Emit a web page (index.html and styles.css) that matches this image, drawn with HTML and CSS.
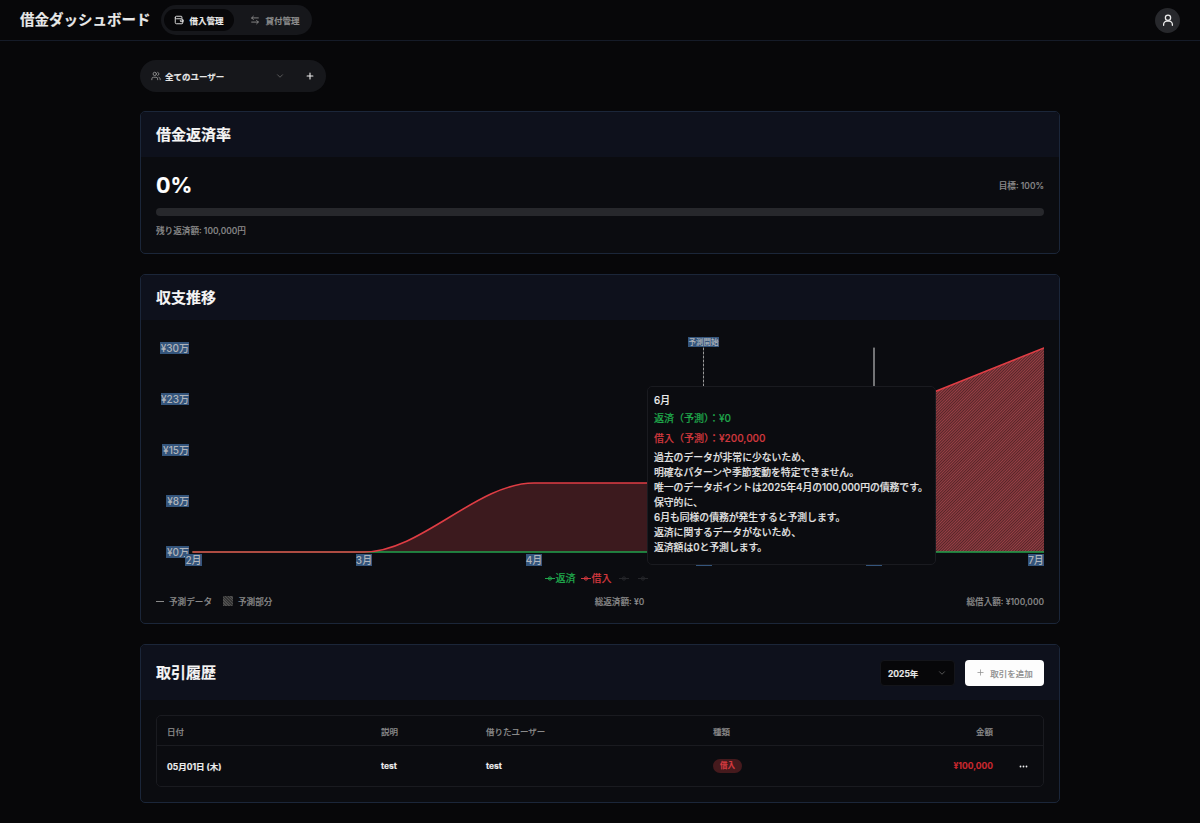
FILE: index.html
```html
<!DOCTYPE html>
<html lang="ja">
<head>
<meta charset="utf-8">
<title>借金ダッシュボード</title>
<link rel="stylesheet" href="styles.css">
</head>
<body>
<header class="topbar">
  <div class="topbar-left">
    <h1 class="brand">借金ダッシュボード</h1>
    <nav class="tabs">
      <a class="tab tab-active">
        <svg class="tab-icon" viewBox="0 0 24 24"><path d="M19 7V5a2 2 0 0 0-2-2H6a3 3 0 0 0-3 3v12a3 3 0 0 0 3 3h13a2 2 0 0 0 2-2v-3"/><path d="M3 6a3 3 0 0 0 3 3h13a2 2 0 0 1 2 2v3"/><path d="M21 12h-4a2 2 0 0 0 0 4h4z"/></svg>
        借入管理
      </a>
      <a class="tab">
        <svg class="tab-icon" viewBox="0 0 24 24"><path d="M8 3 4 7l4 4"/><path d="M4 7h16"/><path d="m16 21 4-4-4-4"/><path d="M20 17H4"/></svg>
        貸付管理
      </a>
    </nav>
  </div>
  <button class="avatar">
    <svg viewBox="0 0 24 24"><circle cx="12" cy="8" r="4.5"/><path d="M4.5 21v-1.500a5.500 5.500 0 0 1 5.500-5.500h4a5.500 5.500 0 0 1 5.500 5.500V21"/></svg>
  </button>
</header>

<main class="page">
  <div class="filter">
    <svg class="filter-users" viewBox="0 0 24 24"><path d="M16 21v-2a4 4 0 0 0-4-4H6a4 4 0 0 0-4 4v2"/><circle cx="9" cy="7" r="4"/><path d="M22 21v-2a4 4 0 0 0-3-3.870"/><path d="M16 3.130a4 4 0 0 1 0 7.750"/></svg>
    <span class="filter-label">全てのユーザー</span>
    <svg class="chev" viewBox="0 0 24 24"><path d="m6 9 6 6 6-6"/></svg>
    <svg class="filter-plus" viewBox="0 0 24 24"><path d="M5 12h14"/><path d="M12 5v14"/></svg>
  </div>

  <section class="card">
    <div class="card-head"><h2 class="card-title">借金返済率</h2></div>
    <div class="card-body rate-body">
      <div class="rate-top">
        <span class="rate-value">0%</span>
        <span class="muted-small">目標: 100%</span>
      </div>
      <div class="progress"></div>
      <p class="muted-small rate-note">残り返済額: 100,000円</p>
    </div>
  </section>

  <section class="card">
    <div class="card-head"><h2 class="card-title">収支推移</h2></div>
    <div class="card-body chart-body">
      <div class="chart">
        <svg class="chart-svg" viewBox="156 320 888 248" width="888" height="248">
          <defs>
            <pattern id="hatch" width="2" height="2" patternUnits="userSpaceOnUse" patternTransform="rotate(45)">
              <rect width="2" height="2" fill="#532528"/>
              <rect width="1" height="2" fill="#9a4046"/>
            </pattern>
          </defs>
          <path class="area-past" d="M364 552C421 552 477 483 534 483L704 483L704 552Z"/>
          <path class="area-future" d="M704 483C761 483 817 439 874 416L1044 348L1044 552L704 552Z"/>
          <line class="line-green" x1="193" y1="552" x2="1044" y2="552"/>
          <path class="line-red" d="M193 552L364 552C421 552 477 483 534 483L704 483C761 483 817 439 874 416L1044 348"/>
          <line class="line-start" x1="703.500" y1="348" x2="703.500" y2="552"/>
          <line class="line-cursor" x1="874" y1="348" x2="874" y2="552"/>

          <g class="ylabels">
            <rect x="160" y="342" width="29" height="12"/><text x="189" y="351.500">¥30万</text>
            <rect x="161" y="393" width="28" height="12"/><text x="189" y="402.500">¥23万</text>
            <rect x="162" y="444" width="27" height="12"/><text x="189" y="453.500">¥15万</text>
            <rect x="166" y="495" width="23" height="12"/><text x="189" y="504.500">¥8万</text>
            <rect x="166" y="546" width="23" height="12"/><text x="189" y="555.500">¥0万</text>
          </g>
          <g class="xlabels">
            <rect x="185" y="554" width="17" height="12"/><text x="193.500" y="563.500">2月</text>
            <rect x="356" y="554" width="16" height="12"/><text x="364" y="563.500">3月</text>
            <rect x="526" y="554" width="16" height="12"/><text x="534" y="563.500">4月</text>
            <rect x="696" y="554" width="16" height="12"/><text x="704" y="563.500">5月</text>
            <rect x="866" y="554" width="16" height="12"/><text x="874" y="563.500">6月</text>
            <rect x="1028" y="554" width="16" height="12"/><text x="1036" y="563.500">7月</text>
          </g>
          <g class="start-label">
            <rect x="688" y="337" width="31" height="10"/><text x="703.500" y="345">予測開始</text>
          </g>
        </svg>
        <div class="tooltip">
          <p class="tip-title">6月</p>
          <p class="tip-green">返済（予測）：¥0</p>
          <p class="tip-red">借入（予測）：¥200,000</p>
          <p class="tip-text">過去のデータが非常に少ないため、<br>明確なパターンや季節変動を特定できません。<br>唯一のデータポイントは2025年4月の100,000円の債務です。<br>保守的に、<br>6月も同様の債務が発生すると予測します。<br>返済に関するデータがないため、<br>返済額は0と予測します。</p>
        </div>
      </div>
      <div class="legend">
        <span class="legend-item legend-green"><svg class="legend-mark" viewBox="0 0 12 8"><path d="M0 4h12"/><circle cx="6" cy="4" r="2"/></svg>返済</span>
        <span class="legend-item legend-red"><svg class="legend-mark" viewBox="0 0 12 8"><path d="M0 4h12"/><circle cx="6" cy="4" r="2"/></svg>借入</span>
        <span class="legend-item legend-dim"><svg class="legend-mark" viewBox="0 0 12 8"><path d="M0 4h12"/><circle cx="6" cy="4" r="2"/></svg></span>
        <span class="legend-item legend-dim"><svg class="legend-mark" viewBox="0 0 12 8"><path d="M0 4h12"/><circle cx="6" cy="4" r="2"/></svg></span>
      </div>
      <div class="chart-foot">
        <div class="foot-key">
          <span class="key-line"></span><span>予測データ</span>
          <span class="key-hatch"></span><span>予測部分</span>
        </div>
        <span>総返済額: ¥0</span>
        <span>総借入額: ¥100,000</span>
      </div>
    </div>
  </section>

  <section class="card">
    <div class="card-head head-tall">
      <h2 class="card-title">取引履歴</h2>
      <div class="head-actions">
        <div class="year-select"><span>2025年</span><svg class="chev" viewBox="0 0 24 24"><path d="m6 9 6 6 6-6"/></svg></div>
        <button class="add-btn"><svg class="add-icon" viewBox="0 0 24 24"><path d="M5 12h14"/><path d="M12 5v14"/></svg>取引を追加</button>
      </div>
    </div>
    <div class="card-body table-body">
      <table class="tx-table">
        <colgroup>
          <col class="c-date"><col class="c-desc"><col class="c-user"><col class="c-type"><col class="c-amount"><col class="c-menu">
        </colgroup>
        <thead>
          <tr><th>日付</th><th>説明</th><th>借りたユーザー</th><th>種類</th><th class="right">金額</th><th></th></tr>
        </thead>
        <tbody>
          <tr>
            <td>05月01日 (木)</td><td>test</td><td>test</td>
            <td><span class="badge">借入</span></td>
            <td class="right amount">¥100,000</td>
            <td class="menu-cell"><svg class="dots" viewBox="0 0 12 4"><circle cx="2" cy="2" r="1.200"/><circle cx="6" cy="2" r="1.200"/><circle cx="10" cy="2" r="1.200"/></svg></td>
          </tr>
        </tbody>
      </table>
    </div>
  </section>
</main>
</body>
</html>
```
FILE: styles.css
```css
* { box-sizing: border-box; margin: 0; padding: 0; }
html, body { height: 100%; }
body {
  background: #070709;
  color: #f2f2f2;
  font-family: Inter, "Noto Sans CJK JP", sans-serif;
  overflow: hidden;
  -webkit-text-stroke: 0.15px currentColor;
}
svg { display: block; fill: none; stroke: currentColor; stroke-linecap: round; stroke-linejoin: round; }

.topbar {
  height: 41px;
  padding: 0 20px;
  display: flex;
  align-items: center;
  justify-content: space-between;
  border-bottom: 1px solid #151b28;
}
.topbar-left { display: flex; align-items: center; gap: 10px; }
.brand { font-size: 14.500px; font-weight: 700; color: #e8e8e8; line-height: 20px; padding-bottom: 1px; }
.tabs {
  display: flex;
  gap: 6px;
  background: #16171b;
  border-radius: 15px;
  height: 30px;
  padding: 4px 3px;
  width: 151px;
}
.tab {
  display: flex;
  align-items: center;
  gap: 6px;
  height: 22px;
  padding: 0 10px 1px;
  border-radius: 11px;
  font-size: 8.500px;
  font-weight: 700;
  color: #8c8c8c;
  white-space: nowrap;
}
.tab-active { background: #070709; color: #eaeaea; }
.tab-icon { width: 10px; height: 10px; stroke-width: 2.200; flex: none; }
.avatar {
  width: 25px;
  height: 25px;
  border: 0;
  border-radius: 50%;
  background: #27282c;
  color: #eee;
  display: flex;
  align-items: center;
  justify-content: center;
}
.avatar svg { width: 14px; height: 14px; stroke-width: 2.200; }

.page {
  width: 920px;
  margin: 0 auto;
  padding-top: 19px;
  display: flex;
  flex-direction: column;
  gap: 20px;
}
.filter {
  width: 186px;
  height: 32px;
  margin-bottom: -1px;
  border-radius: 16px;
  background: #16171b;
  display: flex;
  align-items: center;
  padding: 0 11px;
}
.filter-users { width: 10px; height: 10px; color: #999; stroke-width: 2; flex: none; }
.filter-label { font-size: 8.500px; font-weight: 700; margin-left: 4px; padding-bottom: 1px; flex: 1; color: #e6e6e6; white-space: nowrap; }
.chev { width: 10px; height: 10px; color: #666; stroke-width: 2; flex: none; }
.filter-plus { width: 10px; height: 10px; color: #f0f0f0; stroke-width: 2.600; margin-left: 20px; flex: none; }

.card {
  border: 1px solid #1b2639;
  border-radius: 5px;
  background: #0b0c10;
  overflow: hidden;
}
.card-head {
  height: 45px;
  background: #0e111c;
  display: flex;
  align-items: center;
  justify-content: space-between;
  padding: 0 15px;
}
.head-tall { height: 55px; }
.card-title { font-size: 15px; font-weight: 700; color: #f5f5f5; line-height: 20px; }
.card-body { padding: 0 15px; }

.rate-body { height: 96px; padding-top: 15px; }
.rate-top { display: flex; justify-content: space-between; align-items: center; height: 27px; }
.rate-value { font-size: 21.500px; font-weight: 700; line-height: 27px; color: #fff; }
.muted-small { font-size: 8.600px; font-weight: 500; color: #8a8a8a; padding-bottom: 1px; }
.progress { height: 8px; border-radius: 4px; background: #27282c; margin-top: 9px; }
.rate-note { margin-top: 9px; line-height: 12px; }

.chart-body { height: 303px; }
.chart { position: relative; height: 248px; }
.chart-svg { stroke: none; }
.area-past { fill: #3c1a1e; stroke: none; }
.area-future { fill: url(#hatch); stroke: none; }
.line-green { stroke: #22a24c; stroke-width: 1.500; }
.line-red { stroke: #df3d44; stroke-width: 1.600; fill: none; }
.line-start { stroke: #9a9a9a; stroke-width: 1; stroke-dasharray: 2 2; }
.line-cursor { stroke: #dcdcdc; stroke-width: 1; }
.ylabels rect, .xlabels rect, .start-label rect { fill: #34557c; stroke: none; }
.ylabels text, .xlabels text, .start-label text {
  fill: #b0b4ba;
  stroke: none;
  font-size: 10px;
  font-weight: 500;
}
.ylabels text { text-anchor: end; }
.xlabels text { text-anchor: middle; }
.start-label text { text-anchor: middle; font-size: 7.500px; }

.tooltip {
  position: absolute;
  left: 491px;
  top: 66px;
  width: 289px;
  height: 179px;
  background: #0b0c10;
  border: 1px solid #1a1b20;
  border-radius: 5px;
  padding: 7px 6px;
  font-size: 9.800px;
  font-weight: 500;
}
.tip-title { line-height: 13px; color: #ededed; }
.tip-green { line-height: 14px; margin-top: 4px; color: #1fa64b; font-size: 10px; }
.tip-red { line-height: 14px; margin-top: 6px; color: #d1383e; font-size: 10px; }
.tip-text { line-height: 15px; margin-top: 5px; color: #e4e4e4; white-space: nowrap; }

.legend {
  display: flex;
  justify-content: center;
  gap: 5px;
  height: 14px;
  margin-top: 3px;
  padding-right: 6px;
  font-size: 10px;
  font-weight: 500;
  line-height: 14px;
}
.legend-item { display: flex; align-items: center; gap: 1px; }
.legend-mark { width: 10px; height: 7px; stroke-width: 1.200; }
.legend-green { color: #1fa64b; }
.legend-red { color: #d1383e; }
.legend-dim { color: #26272b; margin-left: 2px; width: 12px; }

.chart-foot {
  display: flex;
  justify-content: space-between;
  align-items: center;
  margin-top: 9px;
  height: 14px;
  font-size: 8.600px;
  font-weight: 500;
  color: #8a8a8a;
}
.foot-key { display: flex; align-items: center; }
.key-line { width: 8px; height: 1px; background: #8a8a8a; margin-right: 5px; }
.key-hatch {
  width: 10px;
  height: 10px;
  margin: 0 5px 0 11px;
  background: repeating-linear-gradient(45deg, #4f4f4f 0 1px, #333 1px 2px);
}

.head-actions { display: flex; align-items: center; gap: 10px; }
.year-select {
  width: 75px;
  height: 26px;
  background: #070709;
  border: 1px solid #14151a;
  border-radius: 4px;
  padding: 0 7px;
  display: flex;
  align-items: center;
  justify-content: space-between;
  font-size: 8.500px;
  font-weight: 700;
  color: #e6e6e6;
}
.add-btn {
  width: 79px;
  height: 26px;
  background: #fdfdfd;
  border: 0;
  border-radius: 4px;
  display: flex;
  align-items: center;
  justify-content: center;
  gap: 5px;
  font-family: inherit;
  font-size: 8.500px;
  font-weight: 500;
  color: #8f8f8f;
  white-space: nowrap;
}
.add-icon { width: 9px; height: 9px; stroke-width: 2; }

.table-body { padding-top: 15px; height: 102px; }
.tx-table {
  width: 888px;
  table-layout: fixed;
  border-collapse: separate;
  border-spacing: 0;
  border: 1px solid #1a1b20;
  border-radius: 5px;
  font-size: 8.500px;
}
.c-date { width: 214px; }
.c-desc { width: 105px; }
.c-user { width: 227px; }
.c-type { width: 150px; }
.c-amount { width: 150px; }
.c-menu { width: 40px; }
.tx-table th {
  height: 30px;
  padding: 0 10px;
  text-align: left;
  font-weight: 500;
  color: #8a8a8a;
  border-bottom: 1px solid #1a1b20;
}
.tx-table td {
  height: 40px;
  padding: 0 10px;
  font-weight: 700;
  color: #ededed;
}
.tx-table .right { text-align: right; }
.tx-table .amount { color: #c9282f; font-size: 8.500px; }
.badge {
  display: inline-block;
  height: 14px;
  line-height: 14px;
  padding: 0 7px;
  border-radius: 7px;
  background: #451a1d;
  color: #d63a40;
  font-size: 7.500px;
  font-weight: 700;
}
.tx-table .menu-cell { padding: 0 0 0 16px; }
.dots { width: 9px; height: 3px; fill: #f0f0f0; stroke: none; }
```
